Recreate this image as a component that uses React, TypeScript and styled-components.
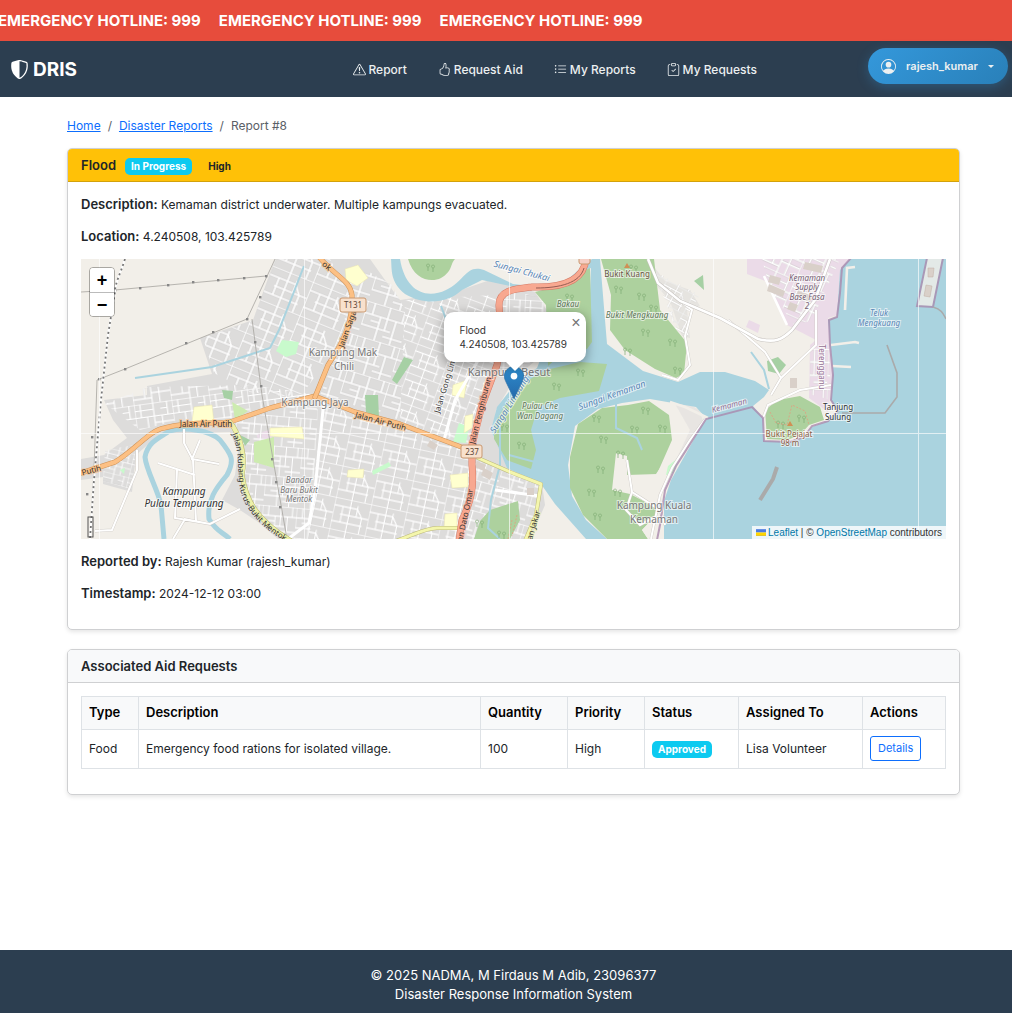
import React from "react";
import styled, { createGlobalStyle } from "styled-components";
import {
  BsShieldShaded,
  BsExclamationTriangle,
  BsHandThumbsUp,
  BsListUl,
  BsClipboardCheck,
  BsPersonCircle,
} from "react-icons/bs";

const GlobalStyle = createGlobalStyle`
  *, *::before, *::after { box-sizing: border-box; }
  body {
    margin: 0;
    background: #fff;
    color: #212529;
    font-family: Inter, "Liberation Sans", sans-serif;
    font-size: 12px;
    line-height: 19px;
  }
`;

const Page = styled.div`
  min-height: 100vh;
  display: flex;
  flex-direction: column;
`;

const Ticker = styled.div`
  display: flex;
  gap: 18px;
  height: 41px;
  align-items: center;
  overflow: hidden;
  white-space: nowrap;
  background: #e74c3c;
  color: #fff;
  font-size: 15px;
  font-weight: 700;
  span:first-child { margin-left: -2px; }
`;

const Navbar = styled.nav`
  display: flex;
  align-items: center;
  height: 56px;
  padding: 0 4px 6px 10px;
  background: #2c3e50;
`;

const Brand = styled.a`
  display: flex;
  align-items: center;
  gap: 4px;
  padding-top: 6px;
  color: #fff;
  font-size: 19px;
  font-weight: 700;
  text-decoration: none;
`;

const NavLinks = styled.div`
  display: flex;
  gap: 31px;
  margin: 0 111px 0 auto;
  padding-top: 6px;
`;

const NavLink = styled.a`
  display: flex;
  align-items: center;
  gap: 3px;
  color: #ecf0f1;
  font-weight: 500;
  text-decoration: none;
  white-space: nowrap;
`;

const UserButton = styled.button`
  display: flex;
  align-items: center;
  justify-content: space-between;
  width: 140px;
  height: 36px;
  padding: 0 14px 0 13px;
  border: 0;
  border-radius: 18px;
  background: linear-gradient(135deg, #3498db, #2980b9);
  box-shadow: 0 3px 12px rgba(52, 152, 219, 0.3);
  color: #ecf0f1;
  font: 600 11px/19px Inter, "Liberation Sans", sans-serif;
`;

const Caret = styled.span`
  border-top: 3px solid #ecf0f1;
  border-left: 3px solid transparent;
  border-right: 3px solid transparent;
`;

const Main = styled.main`
  flex: 1;
  padding: 19px 52px 20px 67px;
`;

const Breadcrumb = styled.nav`
  display: flex;
  gap: 7px;
  margin-bottom: 13px;
  color: #5a6067;
  a { color: #0d6efd; }
`;

const Card = styled.section`
  margin-bottom: 19px;
  border: 1px solid #cfd0d2;
  border-radius: 5px;
  background: #fff;
  box-shadow: 0 2px 4px rgba(0, 0, 0, 0.1);
`;

const CardHeader = styled.header<{ $warning?: boolean }>`
  display: flex;
  align-items: center;
  height: 33px;
  padding: 0 13px;
  border-bottom: 1px solid ${(p) => (p.$warning ? "#d3a20b" : "#cfd0d2")};
  border-radius: 4px 4px 0 0;
  background: ${(p) => (p.$warning ? "#ffc107" : "#f8f9fa")};
  h2 { margin: 0; font-size: 13px; font-weight: 600; line-height: 19px; }
`;

const CardBody = styled.div`
  padding: 13px;
`;

const Line = styled.p`
  margin: 0 0 13px;
  b { font-size: 13px; font-weight: 600; }
`;

const Badge = styled.span<{ $plain?: boolean }>`
  display: inline-block;
  margin-left: ${(p) => (p.$plain ? "10px" : "0")};
  padding: 3px 6px;
  border-radius: 5px;
  background: ${(p) => (p.$plain ? "transparent" : "#0dcaf0")};
  color: ${(p) => (p.$plain ? "#212529" : "#fff")};
  font-size: 10px;
  font-weight: 700;
  line-height: 11px;
`;

const HeaderBadges = styled.div`
  display: flex;
  margin-left: 9px;
  padding-top: 2px;
`;

const Table = styled.table`
  width: 100%;
  margin-bottom: 12px;
  table-layout: fixed;
  border-collapse: collapse;
  th, td {
    padding: 5px 6px 6px 7px;
    border: 1px solid #dee2e6;
    text-align: left;
    vertical-align: middle;
  }
  th { height: 33px; background: #f8f9fa; color: #000; font-size: 13px; font-weight: 600; }
  td { height: 39px; }
`;

const Col = styled.col<{ $w?: number }>`
  width: ${(p) => (p.$w ? p.$w + "px" : "auto")};
`;

const DetailsButton = styled.button`
  display: block;
  height: 25px;
  padding: 0 7px;
  border: 1px solid #0d6efd;
  border-radius: 3px;
  background: #fff;
  color: #0d6efd;
  font: 400 11px/19px Inter, "Liberation Sans", sans-serif;
`;

const Footer = styled.footer`
  padding: 16px 0 9px 15px;
  background: #2c3e50;
  color: #fff;
  font-size: 13px;
  text-align: center;
  p { margin: 0; }
`;

const MapFrame = styled.div`
  position: relative;
  height: 280px;
  margin-bottom: 13px;
  overflow: hidden;
  background: #ddd;
  font-family: "Liberation Sans", Arial, sans-serif;
  > svg { display: block; width: 100%; height: 100%; }
`;

const ZoomControl = styled.div`
  position: absolute;
  top: 8px;
  left: 8px;
  display: flex;
  flex-direction: column;
  border: 1px solid rgba(0, 0, 0, 0.3);
  border-radius: 4px;
  overflow: hidden;
`;

const ZoomButton = styled.button`
  width: 24px;
  height: 24px;
  padding: 0;
  border: 0;
  background: #fff;
  color: #000;
  font: 700 18px/24px "Liberation Sans", Arial, sans-serif;
  & + & { border-top: 1px solid #bbb; }
`;

const Popup = styled.div`
  position: absolute;
  left: 50%;
  bottom: 177px;
  width: 142px;
  margin-left: -70px;
  padding: 11px 16px;
  border-radius: 10px;
  background: #fff;
  box-shadow: 0 3px 12px rgba(0, 0, 0, 0.4);
  color: #333;
  font: 400 10px/14px Inter, "Liberation Sans", sans-serif;
  &::after {
    content: "";
    position: absolute;
    left: 50%;
    bottom: -9px;
    margin-left: -10px;
    border: solid transparent;
    border-width: 10px 10px 0;
    border-top-color: #fff;
  }
  p { margin: 0; white-space: nowrap; }
`;

const CloseButton = styled.button`
  position: absolute;
  top: 1px;
  right: 0;
  width: 19px;
  height: 19px;
  padding: 0;
  border: 0;
  background: none;
  color: #757575;
  font: 400 16px/19px "Liberation Sans", Arial, sans-serif;
`;

const Pin = styled.div`
  position: absolute;
  left: 50%;
  top: 107px;
  width: 20px;
  height: 33px;
  margin-left: -10px;
  svg { display: block; }
`;

const Attribution = styled.div`
  position: absolute;
  right: 0;
  bottom: 0;
  display: flex;
  align-items: center;
  gap: 2px;
  padding: 0 4px;
  background: rgba(255, 255, 255, 0.8);
  color: #333;
  font-size: 10px;
  line-height: 13px;
  white-space: nowrap;
  a { color: #0078a8; text-decoration: none; }
`;

type StreetsProps = { id: string; area: string; angle: number; w?: number; h?: number; kind?: number };

/* A built-up quarter: grey ground under a rotated mesh of white streets. */
function Streets({ id, area, angle, w = 44, h = 36, kind = 0 }: StreetsProps) {
  const meshes = [
    "M0 0H44M0 9H29M9 18H44M0 27H38M0 0V36M11 9V27M20 0V36M29 5V18M36 18V36M29 9L36 18",
    "M0 0H44M0 12H44M0 24H30M0 0V24M8 0V12M17 12V36M24 0V24M33 12V36M39 0V12M8 18H17M24 30H44",
    "M0 0H44M0 8H22M0 16H44M22 24H44M0 30H22M0 0V36M22 0V36M7 0V16M14 16V30M31 16V36M38 0V16M30 8H38",
  ];
  return (
    <>
      <pattern id={id} width={w} height={h} viewBox="0 0 44 36" patternUnits="userSpaceOnUse" patternTransform={`rotate(${angle})`} preserveAspectRatio="none">
        <path d={meshes[kind]} fill="none" stroke="#d0cecd" strokeWidth="2.4" />
        <path d={meshes[kind]} fill="none" stroke="#fff" strokeWidth="1.6" />
      </pattern>
      <polygon points={area} fill={`url(#${id})`} />
    </>
  );
}

type RoadProps = { d: string; fill: string; edge: string; w: number };
function Road({ d, fill, edge, w }: RoadProps) {
  return (
    <g fill="none" strokeLinejoin="round" strokeLinecap="round">
      <path d={d} stroke={edge} strokeWidth={w + 1} />
      <path d={d} stroke={fill} strokeWidth={w} />
    </g>
  );
}

type LabelProps = { x: number; y: number; size?: number; color?: string; italic?: boolean; turn?: number; halo?: string; children: React.ReactNode };
function Label({ x, y, size = 8, color = "#555", italic, turn = 0, halo = "#fff", children }: LabelProps) {
  return (
    <text
      x={x}
      y={y}
      fontSize={size}
      fill={color}
      fontStyle={italic ? "italic" : "normal"}
      textAnchor="middle"
      stroke={halo}
      strokeWidth="2"
      strokeOpacity="0.6"
      paintOrder="stroke"
      transform={turn ? `rotate(${turn} ${x} ${y})` : undefined}
    >
      {children}
    </text>
  );
}

const trees: [number, number][] = [
  [431, 268], [570, 298], [619, 290], [642, 297], [634, 269], [646, 333], [628, 352], [581, 373], [557, 387],
  [505, 428], [522, 446], [597, 419], [604, 440], [635, 430], [646, 411], [601, 470], [592, 493],
  [618, 493], [621, 455], [598, 517], [502, 535], [480, 524], [663, 429], [673, 343], [678, 371],
  [781, 425], [802, 419], [654, 309],
];

const pylons: [number, number][] = [
  [115, 290], [140, 288], [168, 285], [193, 282], [218, 280], [244, 278], [266, 276], [260, 297], [247, 319], [213, 332],
  [186, 343], [125, 369], [99, 379], [255, 342], [261, 386], [272, 459], [276, 482], [280, 507], [92, 437], [87, 494],
];

const rail = "M125 259C120 275 115 283 115 292L108 335L101 400L94 480L90 539";

const lanes =
  "M184 429V443L193 460L196 521M200 440L192 459L219 464M158 463L195 475M177 470L175 518L210 524L240 509M210 524L185 519L173 539" +
  "M137 450V470L112 530L95 531M728 320L765 352L781 378L771 395M781 378L816 345V310M680 301L692 310L685 336L690 365L678 380L662 375" +
  "M763 418L768 405L800 390L831 385M627 460L632 492L660 510L665 525M632 492L626 510L640 525L655 517M706 418L690 440L672 468L660 495L651 539";

function MapDrawing() {
  return (
    <svg viewBox="81 259 865 280" preserveAspectRatio="xMidYMid slice" role="img" aria-label="Map of Kemaman" fontFamily='"Noto Sans", sans-serif'>
      <rect x="-400" y="259" width="1800" height="280" fill="#f2efe9" />

      <g fill="#dddcdb">
        <path d="M275 259L253 320L200 338L212 374L147 386V395L104 400L113 420L127 438L104 455L81 459V480L103 477V484L132 492L136 455L160 434L230 432L238 452L235 475L222 500L240 510L258 522L278 539H530L545 505L542 484L505 462L493 435L496 410L515 378L548 350V312L535 292L490 280L455 292L400 300L385 280L370 259Z" />
        <path d="M648 259L654 283L670 301L682 336L690 338L687 310L700 306L690 290L665 281Z" opacity="0.6" />
        <path d="M670 395L700 410L703 422L688 446L668 470L662 500L656 539H650L662 490L690 430Z" opacity="0.5" />
      </g>
      <path d="M747 259V274L765 281L787 325L816 340L810 345L809 398L828 412L833 375L828 318L838 315L841 270L850 259Z" fill="#ebdbe8" />
      <path d="M749 320L760 325L758 333L746 327ZM256 434L272 429V440L260 444Z" fill="#ebdbe8" />

      <Streets id="s1" area="276,259 253,320 203,338 214,373 250,392 300,398 340,340 352,300 330,259" angle={22} />
      <Streets id="s2" area="352,262 392,285 405,310 400,420 350,404 320,395 342,340" angle={17} kind={1} />
      <Streets id="s3" area="147,387 250,385 312,394 285,405 235,418 175,421 140,430 105,404" angle={-8} kind={2} w={38} h={30} />
      <Streets id="s4" area="405,300 495,295 503,340 494,375 473,445 400,425" angle={20} w={34} h={30} />
      <Streets id="s5" area="503,290 545,298 548,345 512,380 500,370" angle={3} kind={2} w={36} h={34} />
      <Streets id="s6" area="232,424 310,400 318,410 310,539 286,539 240,495 246,455" angle={5} kind={1} w={34} h={30} />
      <Streets id="s7" area="323,405 400,428 468,452 474,475 457,539 308,539 314,480" angle={12} w={36} h={32} />
      <Streets id="s8" area="476,460 541,486 532,539 462,539" angle={16} kind={1} w={36} h={30} />
      <Streets id="s9" area="105,450 134,445 136,470 131,489 103,481" angle={14} kind={2} w={30} h={24} />
      <Streets id="s10" area="762,259 840,259 812,320 795,326 770,290" angle={24} kind={2} w={40} h={34} />
      <Streets id="s11" area="811,345 829,345 831,400 809,394" angle={2} kind={1} w={30} h={40} />
      <Streets id="s12" area="652,270 700,295 690,310 688,338 678,336 665,300" angle={28} w={30} h={22} />

      <path d="M254 442L274 437V468L254 462ZM232 402L248 411L235 420Z" fill="#cdebb0" />
      <path d="M282 340L299 342L296 354L286 357L276 351ZM459 423L469 427L466 443L453 442ZM372 471L389 462L391 466L373 475ZM120 470L125 468L124 474ZM668 466L679 457L674 473L666 475Z" fill="#c8facc" />
      <g fill="#ffffcf" stroke="#e8e3b0" strokeWidth="0.5">
        <path d="M345 269L358 265L368 278L357 286L346 280ZM194 407L212 405L214 423L192 422ZM270 428L302 427L304 439L270 436ZM348 470L364 469L363 478L347 477ZM453 385L467 380L464 398L452 395ZM450 475L468 473V487L452 488ZM445 514L457 513V529L444 528ZM465 416L473 414L472 428L464 433Z" />
      </g>
      <path d="M222 390L233 391L232 400L224 398ZM240 435L250 440L245 446ZM404 357L413 360L397 384L392 380ZM694 281L703 275L704 290ZM767 361L778 357L786 365L779 374L768 371ZM365 395H378L379 417L366 412Z" fill="#a6d0a4" />

      <path fill="#aad3df" d="M400 259C405 290 425 300 446 290C465 281 466 264 484 270L513 284L540 287L566 281L583 266L592 259H600L607 344L643 371L678 382L700 372L725 372L755 381L769 390L764 397L753 406L763 418L764 441L790 442L804 438L812 427L828 421L838 412L831 400L833 372L828 320L837 317L840 270L850 259H1500V539H657L661 510L671 480L706 418L696 407L650 399L622 403L598 409L575 426L568 465L572 496L586 520L607 539H586L555 504L541 484L507 468L491 430L497 407L515 384L537 368L548 340L535 315L560 350L588 344L591 268L570 278L545 291L510 286L482 280L462 290C448 303 425 306 405 294C390 282 392 270 391 259Z" />
      <path fill="#add19e" d="M408 259C414 280 431 283 441 278C453 271 450 264 455 259ZM590 268L592 342L587 349L563 352L548 366L546 305L535 292L550 288ZM601 259L654 259L660 310L687 343L684 374L676 378L655 369L625 350L610 330L611 295ZM607 364L599 391L560 398L538 407L531 430L536 450L531 469L507 460L494 439L494 425L503 408L525 382L546 370L580 362ZM578 424L602 408L628 405L649 401L669 415L672 440L657 474L627 475V456L616 453L612 490L630 494L661 510L642 530L648 539H607L583 515L570 488V457ZM765 410L778 400L800 396L820 407L824 420L809 425L800 435L787 440L767 439ZM490 510L518 501L520 520L510 539H474L480 521Z" />
      <path fill="#f2efe9" d="M656 474L664 462V539H648L642 530L661 510Z" />
      <g fill="none" stroke="#aad3df">
        <path d="M164 539L161 505C158 490 146 470 145 457C148 440 164 436 169 431C185 426 211 431 220 440C232 455 235 460 227 475C216 488 207 500 209 519C217 532 221 531 230 539" strokeWidth="5" />
        <path d="M135 378L212 367L270 348L279 330L304 266" strokeWidth="2" />
        <path d="M441 306L450 330L445 354M500 425V465L491 500L488 528L500 539M509 455L535 462M616 400V428L637 438L642 450M751 352L764 370L769 389" strokeWidth="2" />
      </g>

      <path d="M81 292L115 290L266 276M97 380L125 369L247 319L269 272L275 259M252 319L262 395L274 465L287 539M97 380L94 470L90 539" fill="none" stroke="#a7a4a0" strokeWidth="0.8" />
      <g fill="#888">
        {pylons.map(([x, y]) => (
          <rect key={`${x}-${y}`} x={x - 1} y={y - 1} width="2.4" height="2.4" />
        ))}
      </g>
      <path d={rail} fill="none" stroke="#fff" strokeWidth="2" />
      <path d={rail} fill="none" stroke="#777" strokeWidth="1.8" strokeDasharray="2 3" />
      <rect x="88" y="517" width="5" height="20" fill="none" stroke="#555" />

      <path d={lanes} fill="none" stroke="#cfcbc6" strokeWidth="2.8" />
      <path d={lanes} fill="none" stroke="#fff" strokeWidth="2" />
      <path d="M648 259L658 283L680 301L720 318L758 339C775 343 782 340 792 330L815 300L830 259" fill="none" stroke="#c6c2be" strokeWidth="3.6" />
      <g fill="none" stroke="#fff">
        <path d="M648 259L658 283L680 301L720 318L758 339C775 343 782 340 792 330L815 300L830 259M764 276L787 325" strokeWidth="2.6" />
        <path d="M324 400L315 490L309 523L288 539M495 490L540 496M444 440L455 400L490 340L500 300" strokeWidth="3" />
        <path d="M845 310L847 268L855 267M831 345L855 342L859 343M832 366L851 367M708 418L685 407L670 402" stroke="#f2efe9" strokeWidth="2.6" />
      </g>
      <path fill="#d9d0c9" d="M770 275L781 278L779 285L768 282ZM769 284L785 291L783 297L767 291ZM805 262L823 266L821 273L803 269ZM798 291L812 296L810 302L796 297ZM790 302L798 305L795 312L787 309ZM484 468L493 473L490 480L481 475ZM477 461L486 465L484 471L475 467ZM527 488H534V495H527ZM790 378H797V388H790ZM430 440L438 445L434 450L427 446Z" />

      <Road d="M81 473L115 462C135 450 150 430 164 428C195 420 215 425 230 422L270 408L315 396L355 412L400 424L472 451" fill="#fcc084" edge="#cf9257" w={4} />
      <Road d="M315 397L328 365C345 340 353 320 352 295C350 280 336 277 319 257" fill="#fcc084" edge="#cf9257" w={4} />
      <Road d="M230 422C240 435 246 455 242 475C246 500 256 520 291 541" fill="#eef0a8" edge="#b6b76f" w={4} />
      <Road d="M478 458L510 472L541 484L536 515L525 541M390 543C415 535 425 528 437 528H458" fill="#f4f6ac" edge="#bcb87a" w={3} />
      <Road d="M459 541L462 520C472 500 474 485 472 465V445L482 405L497 365L501 340L499 305C499 290 515 289 532 287C560 288 585 282 586 257" fill="#f8a890" edge="#d47a65" w={6} />
      <path d="M536 288C560 288 580 283 584 268" fill="none" stroke="#965d53" />

      <g fill="none" stroke="#a98aae" strokeWidth="2" opacity="0.8">
        <path d="M851 258L842 268L840 293L837 317L829 320L830 345L833 375L831 400L838 411L828 421L812 426L804 437L790 442L764 441L763 418L752 407L706 419L676 466L665 490L660 525L657 540" />
        <path d="M927 258L917 306L933 307L943 258" fill="#f2efe9" />
      </g>
      <path d="M928 268L934 268L933 277H928ZM926 285L932 286L930 297L924 296Z" fill="#d9d0c9" stroke="#c0afa5" strokeWidth="0.5" />
      <g fill="none" stroke="#aaa">
        <path d="M933 307C941 309 943 313 946 319M887 345L897 373V397L885 413H842" strokeWidth="1.6" />
        <path d="M777 467L773 479L760 500" strokeWidth="4" />
      </g>

      <g stroke="#7fac74" strokeWidth="0.7" fill="none">
        {trees.map(([x, y]) => (
          <path key={`${x},${y}`} d={`M${x - 3} ${y + 3}V${y - 1}m0 0a1.5 1.5 0 1 1 .1 0M${x + 2} ${y + 4}V${y}m0 0a1.5 1.5 0 1 1 .1 0`} />
        ))}
        <path d="M770 412L776 423L787 425L792 405L805 411L809 425M512 520L508 539M517 515L512 536" stroke="#e8967a" strokeDasharray="2 1.5" />
      </g>
      <path d="M627 263L630 268H624ZM790 421L793 426H787Z" fill="#d08f55" />

      <path d="M99.500 259V539M304.500 259V539M509.500 259V539M713.500 259V539M918.500 259V539M81 433.500H946" stroke="#fff" opacity="0.65" />

      <Label x={343} y={356} size={10} color="#777">Kampung Mak</Label>
      <Label x={344} y={370} size={10} color="#777">Chili</Label>
      <Label x={315} y={406} size={10} color="#777">Kampung Jaya</Label>
      <Label x={509} y={376} size={11} color="#777">Kampung Besut</Label>
      <Label x={654} y={509} size={10} color="#777">Kampung Kuala</Label>
      <Label x={654} y={523} size={10} color="#777">Kemaman</Label>
      <Label x={184} y={495} size={10} color="#333" italic>Kampung</Label>
      <Label x={184} y={507} size={10} color="#333" italic>Pulau Tempurung</Label>
      <Label x={299} y={483} color="#777" italic>Bandar</Label>
      <Label x={299} y={493} color="#777" italic>Baru Bukit</Label>
      <Label x={299} y={502} color="#777" italic>Mentok</Label>
      <Label x={568} y={307} color="#5d7659" italic>Bakau</Label>
      <Label x={540} y={409} color="#5d7659" italic>Pulau Che</Label>
      <Label x={540} y={419} color="#5d7659" italic>Wan Dagang</Label>
      <Label x={637} y={318} color="#5d7659" italic>Bukit Mengkuang</Label>
      <Label x={627} y={277} color="#6b5445">Bukit Kuang</Label>
      <Label x={807} y={281} color="#755f73" italic>Kemaman</Label>
      <Label x={807} y={290} color="#755f73" italic>Supply</Label>
      <Label x={807} y={300} color="#755f73" italic>Base Fasa</Label>
      <Label x={807} y={309} color="#755f73" italic>2</Label>
      <Label x={879} y={316} color="#5a87b6" italic>Teluk</Label>
      <Label x={879} y={326} color="#5a87b6" italic>Mengkuang</Label>
      <Label x={838} y={410} color="#333">Tanjung</Label>
      <Label x={838} y={420} color="#333">Sulung</Label>
      <Label x={789} y={437} color="#8b6045">Bukit Pejajat</Label>
      <Label x={790} y={446} color="#8b6045">98 m</Label>
      <Label x={819} y={367} color="#957194" turn={90}>Terengganu</Label>
      <Label x={730} y={408} color="#957194" italic turn={-15}>Kemaman</Label>
      <Label x={613} y={398} size={9} color="#5a87b6" italic turn={-20}>Sungai Kemaman</Label>
      <Label x={521} y={274} size={9} color="#5a87b6" italic turn={15}>Sungai Chukai</Label>
      <Label x={512} y={406} size={9} color="#5a87b6" italic turn={-58}>Sungai Limbung</Label>
      <Label x={206} y={427} color="#333" halo="#fcc084">Jalan Air Putih</Label>
      <Label x={380} y={424} color="#333" halo="#fcc084" turn={15}>Jalan Air Putih</Label>
      <Label x={92} y={473} color="#333" halo="#fcc084" turn={-14}>Putih</Label>
      <Label x={350} y={330} color="#333" halo="#fcc084" turn={-70}>Jalan Saga</Label>
      <Label x={325} y={268} color="#333" halo="#fcc084" turn={40}>ok</Label>
      <Label x={483} y={411} color="#333" halo="#f8a890" turn={-76}>Jalan Penghiburan</Label>
      <Label x={467} y={520} color="#333" halo="#f8a890" turn={-78}>Jalan Dato Omar</Label>
      <Label x={449} y={382} color="#333" turn={-73}>Jalan Gong Limau</Label>
      <Label x={535} y={530} color="#333" halo="#eef0a8" turn={-74}>Jalan Jakar</Label>
      <path id="kubang" d="M232 434C243 460 233 482 246 505C255 520 268 532 290 544" fill="none" />
      <text fontSize="8" fill="#333"><textPath href="#kubang">Jalan Kubang Kurus-Bukit Mentok</textPath></text>

      <g stroke="#c99870" fill="#f8e1cd">
        <rect x="340" y="298" width="26" height="14" rx="2" />
        <rect x="461" y="445" width="21" height="13" rx="2" />
        <rect x="579" y="255" width="11" height="9" rx="2" fill="#f5cfc5" />
      </g>
      <Label x={353} y={308} halo="#f8e1cd" color="#5d4637">T131</Label>
      <Label x={472} y={455} halo="#f8e1cd" color="#5d4637">237</Label>
    </svg>
  );
}

function ReportMap() {
  return (
    <MapFrame>
      <MapDrawing />
      <ZoomControl>
        <ZoomButton aria-label="Zoom in">+</ZoomButton>
        <ZoomButton aria-label="Zoom out">−</ZoomButton>
      </ZoomControl>
      <Pin>
        <svg width="20" height="33" viewBox="0 0 25 41">
          <defs>
            <linearGradient id="pin" x1="0" x2="0" y1="0" y2="1">
              <stop offset="0" stopColor="#2e8bcc" />
              <stop offset="1" stopColor="#246aab" />
            </linearGradient>
          </defs>
          <path d="M12.500 .5C5.900.5.500 5.900.500 12.500c0 2.300.8 4.800 2 7.200L12.500 40.500l10-20.800c1.200-2.400 2-4.900 2-7.200C24.500 5.900 19.100.5 12.500.5z" fill="url(#pin)" stroke="#2d72aa" />
          <circle cx="12.500" cy="12.500" r="4.200" fill="#fff" />
        </svg>
      </Pin>
      <Popup>
        <p>Flood</p>
        <p>4.240508, 103.425789</p>
        <CloseButton aria-label="Close popup">×</CloseButton>
      </Popup>
      <Attribution>
        <svg width="10" height="7" viewBox="0 0 12 8" aria-hidden="true">
          <path fill="#4C7BE1" d="M0 0h12v4H0z" />
          <path fill="#FFD500" d="M0 4h12v3H0z" />
          <path fill="#E0BC00" d="M0 7h12v1H0z" />
        </svg>
        <span>
          <a href="#leaflet">Leaflet</a> | © <a href="#osm">OpenStreetMap</a> contributors
        </span>
      </Attribution>
    </MapFrame>
  );
}

const links = [
  { label: "Report", Icon: BsExclamationTriangle },
  { label: "Request Aid", Icon: BsHandThumbsUp },
  { label: "My Reports", Icon: BsListUl },
  { label: "My Requests", Icon: BsClipboardCheck },
];

const columns: { title: string; width?: number }[] = [
  { title: "Type", width: 57 },
  { title: "Description" },
  { title: "Quantity", width: 87 },
  { title: "Priority", width: 77 },
  { title: "Status", width: 94 },
  { title: "Assigned To", width: 124 },
  { title: "Actions", width: 83 },
];

export default function App() {
  return (
    <Page>
      <GlobalStyle />
      <Ticker>
        <span>EMERGENCY HOTLINE: 999</span>
        <span>EMERGENCY HOTLINE: 999</span>
        <span>EMERGENCY HOTLINE: 999</span>
      </Ticker>
      <Navbar>
        <Brand href="#home">
          <BsShieldShaded size={19} />
          DRIS
        </Brand>
        <NavLinks>
          {links.map(({ label, Icon }) => (
            <NavLink key={label} href="#nav">
              <Icon size={13} />
              {label}
            </NavLink>
          ))}
        </NavLinks>
        <UserButton>
          <BsPersonCircle size={15} />
          rajesh_kumar
          <Caret />
        </UserButton>
      </Navbar>
      <Main>
        <Breadcrumb aria-label="Breadcrumb">
          <a href="#home">Home</a>
          <span>/</span>
          <a href="#reports">Disaster Reports</a>
          <span>/</span>
          <span>Report #8</span>
        </Breadcrumb>
        <Card>
          <CardHeader $warning>
            <h2>Flood</h2>
            <HeaderBadges>
              <Badge>In Progress</Badge>
              <Badge $plain>High</Badge>
            </HeaderBadges>
          </CardHeader>
          <CardBody>
            <Line><b>Description:</b> Kemaman district underwater. Multiple kampungs evacuated.</Line>
            <Line><b>Location:</b> 4.240508, 103.425789</Line>
            <ReportMap />
            <Line><b>Reported by:</b> Rajesh Kumar (rajesh_kumar)</Line>
            <Line><b>Timestamp:</b> 2024-12-12 03:00</Line>
          </CardBody>
        </Card>
        <Card>
          <CardHeader>
            <h2>Associated Aid Requests</h2>
          </CardHeader>
          <CardBody>
            <Table>
              <colgroup>
                {columns.map((c) => <Col key={c.title} $w={c.width} />)}
              </colgroup>
              <thead>
                <tr>{columns.map((c) => <th key={c.title} scope="col">{c.title}</th>)}</tr>
              </thead>
              <tbody>
                <tr>
                  <td>Food</td>
                  <td>Emergency food rations for isolated village.</td>
                  <td>100</td>
                  <td>High</td>
                  <td><Badge>Approved</Badge></td>
                  <td>Lisa Volunteer</td>
                  <td><DetailsButton>Details</DetailsButton></td>
                </tr>
              </tbody>
            </Table>
          </CardBody>
        </Card>
      </Main>
      <Footer>
        <p>© 2025 NADMA, M Firdaus M Adib, 23096377</p>
        <p>Disaster Response Information System</p>
      </Footer>
    </Page>
  );
}
